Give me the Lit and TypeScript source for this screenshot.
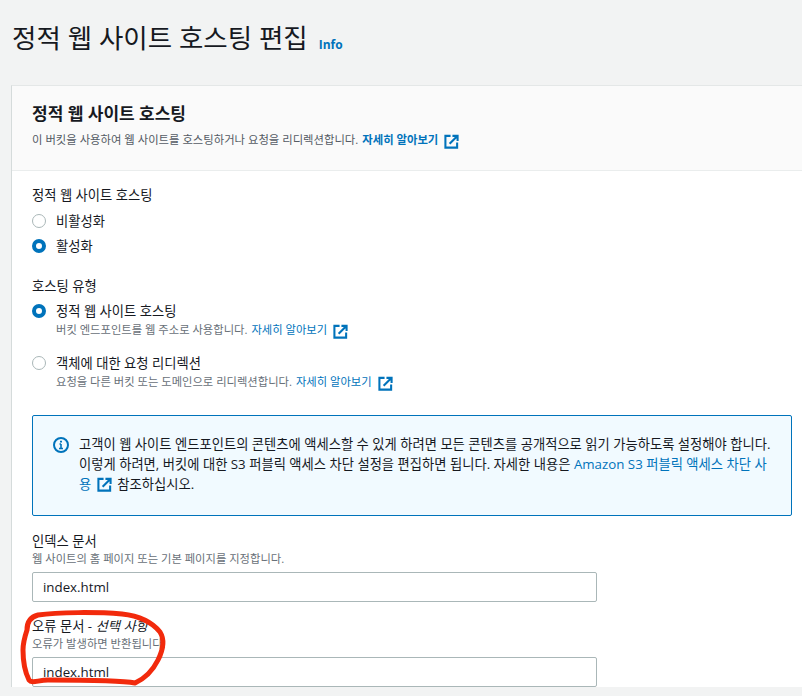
import { LitElement, html, css, svg } from "lit";
import { customElement } from "lit/decorators.js";

const externalIcon = html`<svg class="ext" viewBox="0 0 16 16" fill="none" stroke="currentColor" stroke-width="2.2">
  <path d="M7 2H1.5v12.5H14V9" />
  <path d="M6 10.5 14 2.5M9 2h5.5v5.5" />
</svg>`;

const scribble = svg`<path d="M27 630C27 622 30 617 38 615C58 612 98 612 122 614C140 616 152 622 160 632C165 640 163 650 158 660C153 670 146 678 135 683C120 680 82 680 48 680C38 680 32 684 29 680C25 672 23 660 23 650C23 642 25 636 27 630Z"
  fill="none" stroke="#f22a0c" stroke-width="5" stroke-linecap="round" />`;

@customElement("app-root")
export class AppRoot extends LitElement {
  static styles = css`
    :host {
      display: block;
      position: relative;
      height: 696px;
      overflow: hidden;
      background: #f2f3f3;
      color: #16191f;
      font-family: "Open Sans", "Noto Sans CJK KR", sans-serif;
      font-size: 13.3px;
      line-height: 20px;
    }

    a {
      color: #0073bb;
      text-decoration: none;
    }

    .page-head {
      display: flex;
      align-items: flex-start;
      gap: 11px;
      height: 85px;
      box-sizing: border-box;
      padding: 19px 0 0 12px;
    }

    h1 {
      margin: 0;
      font-size: 26.5px;
      font-weight: 400;
      line-height: 38px;
    }

    .info {
      font-size: 12px;
      font-weight: 700;
      line-height: 16px;
      margin-top: 18px;
    }

    .card {
      margin-left: 11px;
      width: 830px;
      background: #fff;
      border-left: 1px solid #d5dbdb;
      border-top: 1px solid #e4e7e7;
    }

    .card-head {
      height: 85px;
      box-sizing: border-box;
      padding: 17px 20px 0;
      background: #fafafa;
      border-bottom: 1px solid #eaeded;
    }

    h2 {
      margin: 0;
      font-size: 17px;
      font-weight: 700;
      line-height: 22px;
    }

    .desc {
      font-size: 11.35px;
      line-height: 16px;
      color: #545b64;
      margin-top: 6px;
      display: flex;
      align-items: center;
    }

    .desc a {
      font-weight: 700;
      margin-left: 4px;
    }

    .hint {
      font-size: 11.3px;
      line-height: 16px;
      color: #687078;
      display: flex;
      align-items: center;
    }

    .hint a {
      margin-left: 4px;
    }

    .ext {
      width: 15px;
      height: 15px;
      color: #0073bb;
      margin: 3px 0 0 6px;
      flex: none;
    }

    .card-body {
      padding: 14px 20px 0;
      display: flex;
      flex-direction: column;
    }

    .group-label {
      line-height: 20px;
      margin-bottom: 1px;
    }

    .radio {
      display: flex;
      gap: 10px;
      margin-top: 5px;
    }

    .dot {
      width: 14px;
      height: 14px;
      box-sizing: border-box;
      border-radius: 50%;
      border: 1px solid #aab7b8;
      background: #fff;
      flex: none;
      margin-top: 3px;
    }

    .dot.on {
      border: 4px solid #0073bb;
    }

    .type-group {
      margin-top: 20px;
    }

    .type-group .radio + .radio {
      margin-top: 14px;
    }

    .alert {
      margin-top: 24px;
      width: 760px;
      height: 101px;
      box-sizing: border-box;
      border: 1px solid #0073bb;
      border-radius: 2px;
      background: #f1faff;
      padding: 18px 8px 18px 20px;
      display: flex;
      gap: 10px;
    }

    .alert svg.i {
      width: 16px;
      height: 16px;
      flex: none;
      margin-top: 3px;
      color: #0073bb;
    }

    .alert .ext {
      margin: 0 5px -3px 6px;
    }

    .field {
      display: flex;
      flex-direction: column;
    }

    .field.first {
      margin-top: 15px;
    }

    .field.second {
      margin-top: 14px;
    }

    .field .group-label {
      margin-bottom: 0;
    }

    .field .hint {
      margin-bottom: 5px;
    }

    .input {
      width: 565px;
      height: 30px;
      box-sizing: border-box;
      border: 1px solid #aab7b8;
      border-radius: 2px;
      background: #fff;
      padding: 0 10px;
      line-height: 28px;
    }

    .ink {
      position: absolute;
      inset: 0;
      pointer-events: none;
    }
  `;

  render() {
    return html`
      <div class="page-head">
        <h1>정적 웹 사이트 호스팅 편집</h1>
        <a class="info" href="#">Info</a>
      </div>
      <section class="card">
        <header class="card-head">
          <h2>정적 웹 사이트 호스팅</h2>
          <div class="desc">
            이 버킷을 사용하여 웹 사이트를 호스팅하거나 요청을 리디렉션합니다.
            <a href="#">자세히 알아보기</a>${externalIcon}
          </div>
        </header>
        <div class="card-body">
          <div class="group-label">정적 웹 사이트 호스팅</div>
          <div class="radio"><span class="dot"></span>비활성화</div>
          <div class="radio"><span class="dot on"></span>활성화</div>

          <div class="type-group">
            <div class="group-label">호스팅 유형</div>
            <div class="radio">
              <span class="dot on"></span>
              <div>
                정적 웹 사이트 호스팅
                <div class="hint">버킷 엔드포인트를 웹 주소로 사용합니다. <a href="#">자세히 알아보기</a>${externalIcon}</div>
              </div>
            </div>
            <div class="radio">
              <span class="dot"></span>
              <div>
                객체에 대한 요청 리디렉션
                <div class="hint">요청을 다른 버킷 또는 도메인으로 리디렉션합니다. <a href="#">자세히 알아보기</a>${externalIcon}</div>
              </div>
            </div>
          </div>

          <div class="alert">
            <svg class="i" viewBox="0 0 16 16" fill="none" stroke="currentColor" stroke-width="2">
              <circle cx="8" cy="8" r="7" />
              <path d="M8 7v4.5M6 11.5h4M6.5 7H8" stroke-width="1.6" />
              <path d="M8 3.8v1.8" />
            </svg>
            <div>
              고객이 웹 사이트 엔드포인트의 콘텐츠에 액세스할 수 있게 하려면 모든 콘텐츠를 공개적으로 읽기 가능하도록 설정해야 합니다.<br />
              이렇게 하려면, 버킷에 대한 S3 퍼블릭 액세스 차단 설정을 편집하면 됩니다. 자세한 내용은
              <a href="#">Amazon S3 퍼블릭 액세스 차단 사<br />용</a>${externalIcon}참조하십시오.
            </div>
          </div>

          <div class="field first">
            <div class="group-label">인덱스 문서</div>
            <div class="hint">웹 사이트의 홈 페이지 또는 기본 페이지를 지정합니다.</div>
            <div class="input">index.html</div>
          </div>
          <div class="field second">
            <div class="group-label">오류 문서 - <em>선택 사항</em></div>
            <div class="hint">오류가 발생하면 반환됩니다.</div>
            <div class="input">index.html</div>
          </div>
        </div>
      </section>
      <svg class="ink" viewBox="0 0 802 696">${scribble}</svg>
    `;
  }
}
